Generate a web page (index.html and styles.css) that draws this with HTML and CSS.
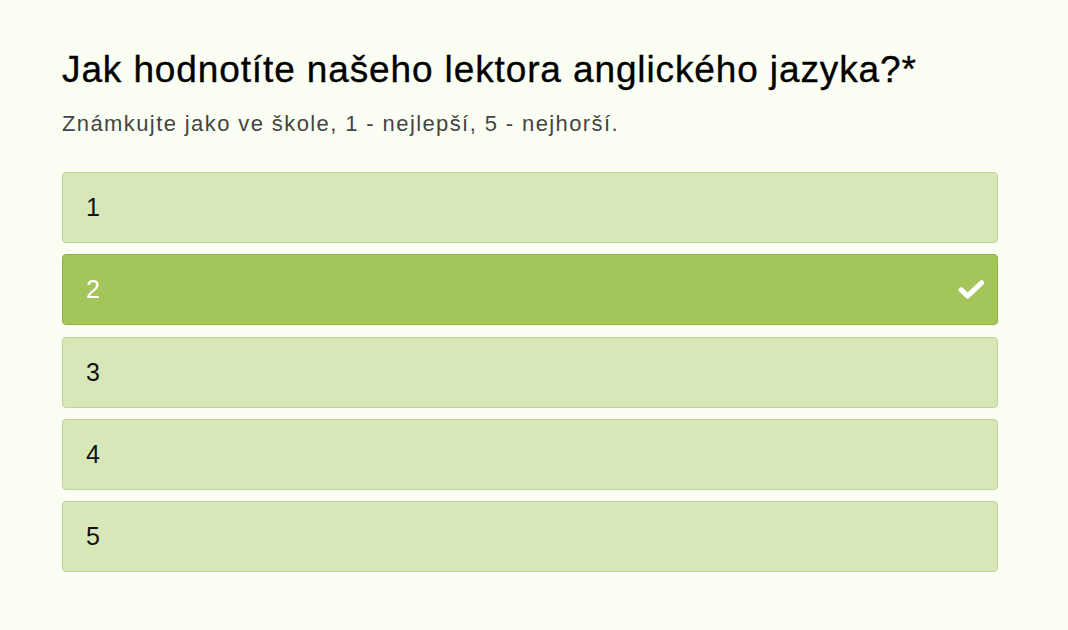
FILE: index.html
```html
<!DOCTYPE html>
<html lang="cs">
<head>
<meta charset="utf-8">
<link rel="stylesheet" href="styles.css">
</head>
<body>
<main class="question">
  <h1 class="title">Jak hodnotíte našeho lektora anglického jazyka?*</h1>
  <p class="hint">Známkujte jako ve škole, 1 - nejlepší, 5 - nejhorší.</p>
  <div class="options">
    <div class="option">1</div>
    <div class="option selected">2
      <svg class="check" viewBox="0 0 28 22" width="27" height="21"><path d="M3.2 11.5 L10 17.8 L24.5 4" fill="none" stroke="#fff" stroke-width="5.4" stroke-linecap="round" stroke-linejoin="round"/></svg>
    </div>
    <div class="option">3</div>
    <div class="option">4</div>
    <div class="option">5</div>
  </div>
</main>
</body>
</html>
```
FILE: styles.css
```css
html, body {
  margin: 0;
  padding: 0;
  background: #fbfef3;
}
body {
  font-family: "Liberation Sans", Arial, sans-serif;
  color: #000;
}
.question {
  padding: 46px 70px 0 62px;
}
.title {
  margin: 0;
  font-size: 37px;
  font-weight: normal;
  line-height: 48px;
  letter-spacing: 0.88px;
  -webkit-text-stroke: 0.35px #000;
}
.hint {
  margin: 15px 0 0;
  font-size: 22px;
  line-height: 30px;
  color: #444;
  letter-spacing: 1.4px;
}
.options {
  margin-top: 33px;
  display: flex;
  flex-direction: column;
  gap: 11.25px;
}
.option {
  height: 69px;
  border: 1px solid #bfd597;
  background: #d8e7b7;
  border-radius: 4px;
  box-sizing: content-box;
  display: flex;
  align-items: center;
  justify-content: space-between;
  padding: 0 12px 0 23px;
  font-size: 25px;
  color: #111;
}
.option.selected {
  background: #a3c55a;
  border-color: #8fb43c;
  color: #fff;
}
.check {
  display: block;
}
```
